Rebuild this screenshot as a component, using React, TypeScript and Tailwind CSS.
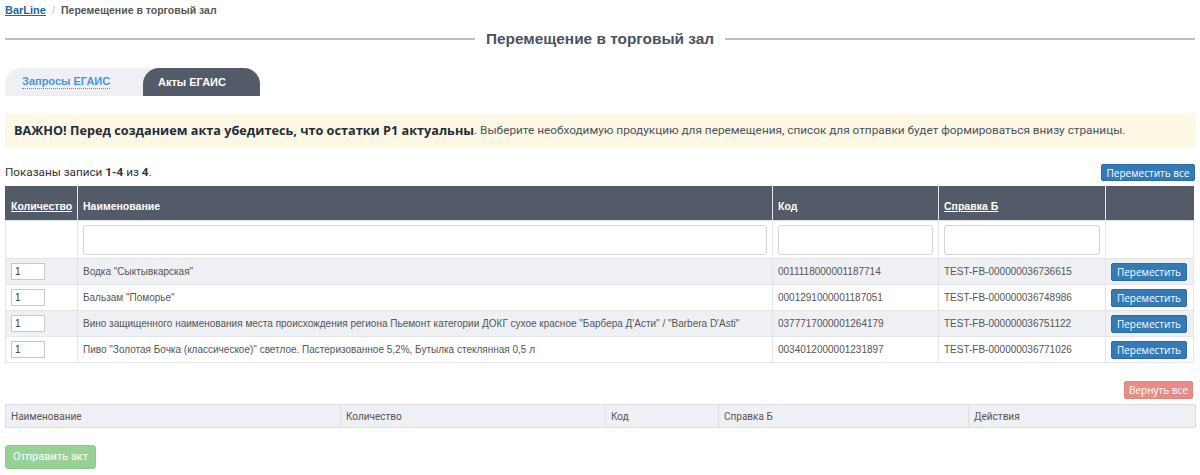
import React from "react";

const rows = [
  { name: 'Водка "Сыктывкарская"', code: "0011118000001187714", ref: "TEST-FB-000000036736615" },
  { name: 'Бальзам "Поморье"', code: "0001291000001187051", ref: "TEST-FB-000000036748986" },
  {
    name: 'Вино защищенного наименования места происхождения региона Пьемонт категории ДОКГ сухое красное "Барбера Д\'Асти" / "Barbera D\'Asti"',
    code: "0377717000001264179",
    ref: "TEST-FB-000000036751122",
  },
  {
    name: 'Пиво "Золотая Бочка (классическое)" светлое. Пастеризованное 5,2%, Бутылка стеклянная 0,5 л',
    code: "0034012000001231897",
    ref: "TEST-FB-000000036771026",
  },
];

export default function App() {
  return (
    <div className="w-[1200px] px-[5px] bg-white text-[#555] font-['Liberation_Sans',Arial,sans-serif]">
      {/* breadcrumb */}
      <div className="h-[18px] pt-[3px] text-[11px] font-bold leading-[13px] flex items-center">
        <a className="text-[#21679f] underline">BarLine</a>
        <span className="text-[#bbb] mx-[6px] font-normal">/</span>
        <span className="text-[#555] text-[10.5px]">Перемещение в торговый зал</span>
      </div>
      {/* title */}
      <div className="flex items-center mt-[11px] h-[20px]">
        <div className="flex-1 h-[2px] bg-[#b8bbc1]" />
        <div className="px-[11px] text-[15.4px] font-bold text-[#4a5361] leading-[20px]">Перемещение в торговый зал</div>
        <div className="flex-1 h-[2px] bg-[#b8bbc1]" />
      </div>
      {/* tabs */}
      <div className="mt-[19px] flex h-[28px]">
        <div className="flex bg-[#eef0f3] rounded-tl-[16px] rounded-tr-[16px] w-[255px]">
          <div className="w-[138px] pl-[17px] flex items-center">
            <span className="text-[11px] font-bold text-[#4b94db] border-b border-dotted border-[#4b94db] leading-[13px]">Запросы ЕГАИС</span>
          </div>
          <div className="w-[117px] bg-[#525b67] rounded-tl-[16px] rounded-tr-[16px] pl-[15px] flex items-center text-[11px] font-bold text-white">
            Акты ЕГАИС
          </div>
        </div>
      </div>
      {/* alert */}
      <div className="mt-[18px] h-[33px] bg-[#fcf8e5] pl-[9px] flex items-center text-[11.8px] font-['Roboto',sans-serif] text-[#4a5361] whitespace-nowrap">
        <b className="text-[#1f2d3d] font-['Open_Sans',sans-serif] font-bold text-[12.7px]">ВАЖНО! Перед созданием акта убедитесь, что остатки Р1 актуальны</b>.&nbsp;Выберите необходимую продукцию для перемещения, список для отправки будет формироваться внизу страницы.
      </div>
      {/* info row */}
      <div className="mt-[17px] h-[17px] flex items-center justify-between">
        <div className="text-[11.7px] text-[#333] font-['Roboto',sans-serif]">
          Показаны записи <b>1-4</b> из <b>4</b>.
        </div>
        <button className="h-[17px] w-[94px] bg-[#337ab7] border border-[#2e6da4] rounded-[2px] text-white text-[10px] leading-[14px] font-['Open_Sans',sans-serif]">
          Переместить все
        </button>
      </div>
      {/* main table */}
      <table className="mt-[5px] w-[1188px] border-collapse text-[10px] table-fixed">
        <colgroup>
          <col className="w-[72px]" />
          <col className="w-[695px]" />
          <col className="w-[166px]" />
          <col className="w-[167px]" />
          <col className="w-[88px]" />
        </colgroup>
        <thead>
          <tr className="bg-[#525b67] h-[34px] text-white font-bold text-[10.5px]">
            <th className="border border-[#e3e5e8] border-t-[#525b67] border-l-[#525b67] text-left align-bottom pb-[5px] pl-[5px] font-bold">
              <span className="underline">Количество</span>
            </th>
            <th className="border border-[#e3e5e8] border-t-[#525b67] text-left align-bottom pb-[5px] pl-[5px] font-bold">Наименование</th>
            <th className="border border-[#e3e5e8] border-t-[#525b67] text-left align-bottom pb-[5px] pl-[5px] font-bold">Код</th>
            <th className="border border-[#e3e5e8] border-t-[#525b67] text-left align-bottom pb-[5px] pl-[5px] font-bold">
              <span className="underline">Справка Б</span>
            </th>
            <th className="border border-[#e3e5e8] border-t-[#525b67] border-r-[#525b67]" />
          </tr>
        </thead>
        <tbody>
          <tr className="h-[38px] bg-white">
            <td className="border border-[#e3e5e8]" />
            <td className="border border-[#e3e5e8] px-[5px]">
              <div className="h-[30px] border border-[#d0d3d8] rounded-[3px]" />
            </td>
            <td className="border border-[#e3e5e8] px-[5px]">
              <div className="h-[30px] border border-[#d0d3d8] rounded-[3px]" />
            </td>
            <td className="border border-[#e3e5e8] px-[5px]">
              <div className="h-[30px] border border-[#d0d3d8] rounded-[3px]" />
            </td>
            <td className="border border-[#e3e5e8]" />
          </tr>
          {rows.map((r, i) => (
            <tr key={i} className={`h-[26px] ${i % 2 === 0 ? "bg-[#eef0f3]" : "bg-white"}`}>
              <td className="border border-[#e3e5e8] pl-[5px]">
                <div className="w-[34px] h-[17px] bg-white border border-[#c4c7cc] text-[10px] leading-[15px] pl-[3px] text-[#333]">1</div>
              </td>
              <td className="border border-[#e3e5e8] pl-[5px] whitespace-nowrap overflow-hidden">{r.name}</td>
              <td className="border border-[#e3e5e8] pl-[5px]">{r.code}</td>
              <td className="border border-[#e3e5e8] pl-[5px]">{r.ref}</td>
              <td className="border border-[#e3e5e8] pl-[5px]">
                <button className="h-[18px] w-[76px] bg-[#337ab7] border border-[#2e6da4] rounded-[2px] text-white text-[10px] leading-[14px] font-['Open_Sans',sans-serif]">
                  Переместить
                </button>
              </td>
            </tr>
          ))}
        </tbody>
      </table>
      {/* return all */}
      <div className="mt-[18px] flex justify-end">
        <button className="h-[18px] w-[69px] mr-[2px] bg-[#e68c89] border border-[#e3857f] rounded-[2px] text-white text-[10px] leading-[14px] font-['Open_Sans',sans-serif]">
          Вернуть все
        </button>
      </div>
      {/* bottom table */}
      <table className="mt-[5px] w-[1190px] border-collapse text-[10px] table-fixed font-['Roboto',sans-serif]">
        <colgroup>
          <col className="w-[335px]" />
          <col className="w-[265px]" />
          <col className="w-[113px]" />
          <col className="w-[250px]" />
          <col className="w-[227px]" />
        </colgroup>
        <thead>
          <tr className="h-[23px] bg-[#eef0f3] text-[#555]">
            <th className="border border-[#dcdfe3] text-left pl-[5px] font-normal">Наименование</th>
            <th className="border border-[#dcdfe3] text-left pl-[5px] font-normal">Количество</th>
            <th className="border border-[#dcdfe3] text-left pl-[5px] font-normal">Код</th>
            <th className="border border-[#dcdfe3] text-left pl-[5px] font-normal">Справка Б</th>
            <th className="border border-[#dcdfe3] text-left pl-[5px] font-normal">Действия</th>
          </tr>
        </thead>
      </table>
      {/* send */}
      <div className="mt-[15px] pb-[6px]">
        <button className="h-[24px] w-[91px] bg-[#98d196] border border-[#8fcb8c] rounded-[3px] text-white text-[11px] font-['Roboto',sans-serif]">
          Отправить акт
        </button>
      </div>
    </div>
  );
}
